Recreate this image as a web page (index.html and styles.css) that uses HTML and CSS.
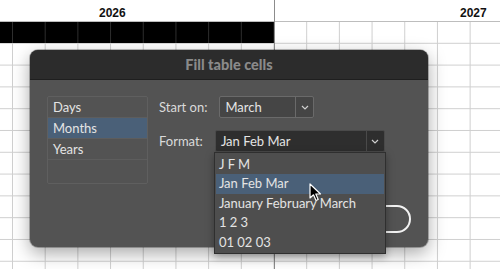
FILE: index.html
```html
<!DOCTYPE html>
<html lang="en">
<head>
  <meta charset="UTF-8" />
  <title>Fill table cells</title>
  <link rel="stylesheet" href="styles.css">
</head>
<body>
  <div class="cal">
    <div class="years">
      <div class="year year-a">2026</div>
      <div class="year year-b">2027</div>
    </div>
    <div class="rows">
      <div class="fill"></div>
    </div>
    <div class="divider"></div>
  </div>

  <div class="dialog">
    <div class="dialog-title">Fill table cells</div>
    <div class="dialog-body">
      <div class="unit-list">
        <div class="unit">Days</div>
        <div class="unit active">Months</div>
        <div class="unit">Years</div>
        <div class="unit"></div>
      </div>
      <div class="fields">
        <div class="field">
          <span class="label">Start on:</span>
          <div class="select start">
            <span class="value">March</span>
            <span class="arrow">
              <svg width="8" height="5" viewBox="0 0 8 5"><polyline points="1,1 4,4 7,1" fill="none" stroke="#d0d0d0" stroke-width="1.2"/></svg>
            </span>
          </div>
        </div>
        <div class="field">
          <span class="label">Format:</span>
          <div class="select format open">
            <span class="value">Jan Feb Mar</span>
            <span class="arrow">
              <svg width="8" height="5" viewBox="0 0 8 5"><polyline points="1,1 4,4 7,1" fill="none" stroke="#d0d0d0" stroke-width="1.2"/></svg>
            </span>
            <div class="menu">
              <div class="option">J F M</div>
              <div class="option active">Jan Feb Mar</div>
              <div class="option">January February March</div>
              <div class="option">1 2 3</div>
              <div class="option">01 02 03</div>
            </div>
          </div>
        </div>
      </div>
    </div>
    <div class="dialog-foot">
      <button class="ok-btn">OK</button>
    </div>
  </div>

  <svg class="cursor" width="13" height="19" viewBox="0 0 13 19">
    <path d="M1 1 L1 15 L4.5 11.8 L7 17.5 L9.2 16.5 L6.8 11 L11.5 11 Z" fill="#000" stroke="#fff" stroke-width="1.2" stroke-linejoin="round"/>
  </svg>
</body>
</html>
```

FILE: styles.css
```css
* {
  box-sizing: border-box;
}

html, body {
  margin: 0;
  padding: 0;
}

body {
  width: 500px;
  height: 269px;
  overflow: hidden;
  position: relative;
  background: #fff;
  font-family: Lato, 'Open Sans', sans-serif;
}

/* calendar behind the dialog */
.cal {
  position: relative;
  height: 269px;
}

.years {
  display: flex;
  height: 22px;
  border-bottom: 1px solid #bdbdbd;
}

.year {
  font-family: 'Liberation Sans Narrow', 'Liberation Sans', sans-serif;
  font-stretch: condensed;
  font-weight: bold;
  font-size: 12px;
  color: #111;
  line-height: 26px;
}

.year-a {
  width: 274px;
  padding-left: 99px;
}

.year-b {
  flex: 1;
  padding-left: 186px;
}

.rows {
  height: 247px;
  background-image:
    linear-gradient(to right, #cfcfcf 1px, transparent 1px),
    linear-gradient(to bottom, #cfcfcf 1px, transparent 1px);
  background-size: 32.7px 100%, 100% 21.8px;
  background-position: 12px 0, 0 -1px;
}

.fill {
  width: 274px;
  height: 21px;
  background-color: #000;
  background-image: linear-gradient(to right, #2e2e2e 1px, transparent 1px);
  background-size: 32.7px 100%;
  background-position: 12px 0;
}

.divider {
  position: absolute;
  left: 274px;
  top: 0;
  width: 1px;
  height: 269px;
  background: #8c8c8c;
}

/* dialog */
.dialog {
  position: absolute;
  left: 30px;
  top: 50px;
  width: 398px;
  height: 197px;
  background: #535353;
  border-radius: 8px;
  box-shadow: 0 6px 18px rgba(0,0,0,0.35), 0 0 0 1px rgba(0,0,0,0.25);
  color: #e4e4e4;
  font-size: 13px;
}

.dialog-title {
  height: 30px;
  background: #2c2c2c;
  border-radius: 8px 8px 0 0;
  border-bottom: 1px solid #1f1f1f;
  text-align: center;
  line-height: 29px;
  font-size: 14.5px;
  font-weight: 900;
  color: #8a8a8a;
}

.dialog-body {
  display: flex;
  gap: 11px;
  padding: 16px 0 0 17px;
}

.unit-list {
  width: 101px;
  border: 1px solid #5f5f5f;
  border-radius: 2px;
}

.unit {
  height: 21px;
  line-height: 20px;
  padding-left: 5px;
  border-bottom: 1px solid #5d5d5d;
}

.unit:last-child {
  height: 23px;
  border-bottom: none;
}

.unit.active {
  background: #4a6078;
}

.fields {
  display: flex;
  flex-direction: column;
  gap: 12px;
}

.field {
  display: flex;
  align-items: center;
  gap: 12px;
}

.label {
  color: #dadada;
}

.select {
  position: relative;
  display: flex;
  height: 22px;
  border: 1px solid #6a6a6a;
  border-radius: 2px;
  background: #454545;
}

.select .value {
  flex: 1;
  padding-left: 5px;
  line-height: 20px;
}

.select .arrow {
  width: 18px;
  border-left: 1px solid #6a6a6a;
  display: flex;
  align-items: center;
  justify-content: center;
}

.select.start {
  width: 95px;
}

.select.format {
  width: 170px;
  background: #2e2e2e;
  border-color: #4a4a4a;
}

.select.format .arrow {
  border-left-color: #4a4a4a;
}

.menu {
  position: absolute;
  top: 21px;
  left: -2px;
  width: 172px;
  padding: 2px 1px 1px;
  background: #4e4e4e;
  border: 1px solid #2f2f2f;
  box-shadow: 0 3px 8px rgba(0,0,0,0.35);
  z-index: 5;
}

.option {
  height: 19.4px;
  line-height: 19px;
  padding-left: 3px;
  white-space: nowrap;
}

.option.active {
  background: #4a6078;
}

.dialog-foot {
  display: flex;
  justify-content: flex-end;
  padding: 0 17px;
  margin-top: 21px;
}

.ok-btn {
  width: 80px;
  height: 28px;
  border: 2px solid #f2f2f2;
  border-radius: 14px;
  background: transparent;
  color: #fff;
  font-family: inherit;
  font-size: 13px;
}

.cursor {
  position: absolute;
  left: 309px;
  top: 183px;
  z-index: 10;
}
```
